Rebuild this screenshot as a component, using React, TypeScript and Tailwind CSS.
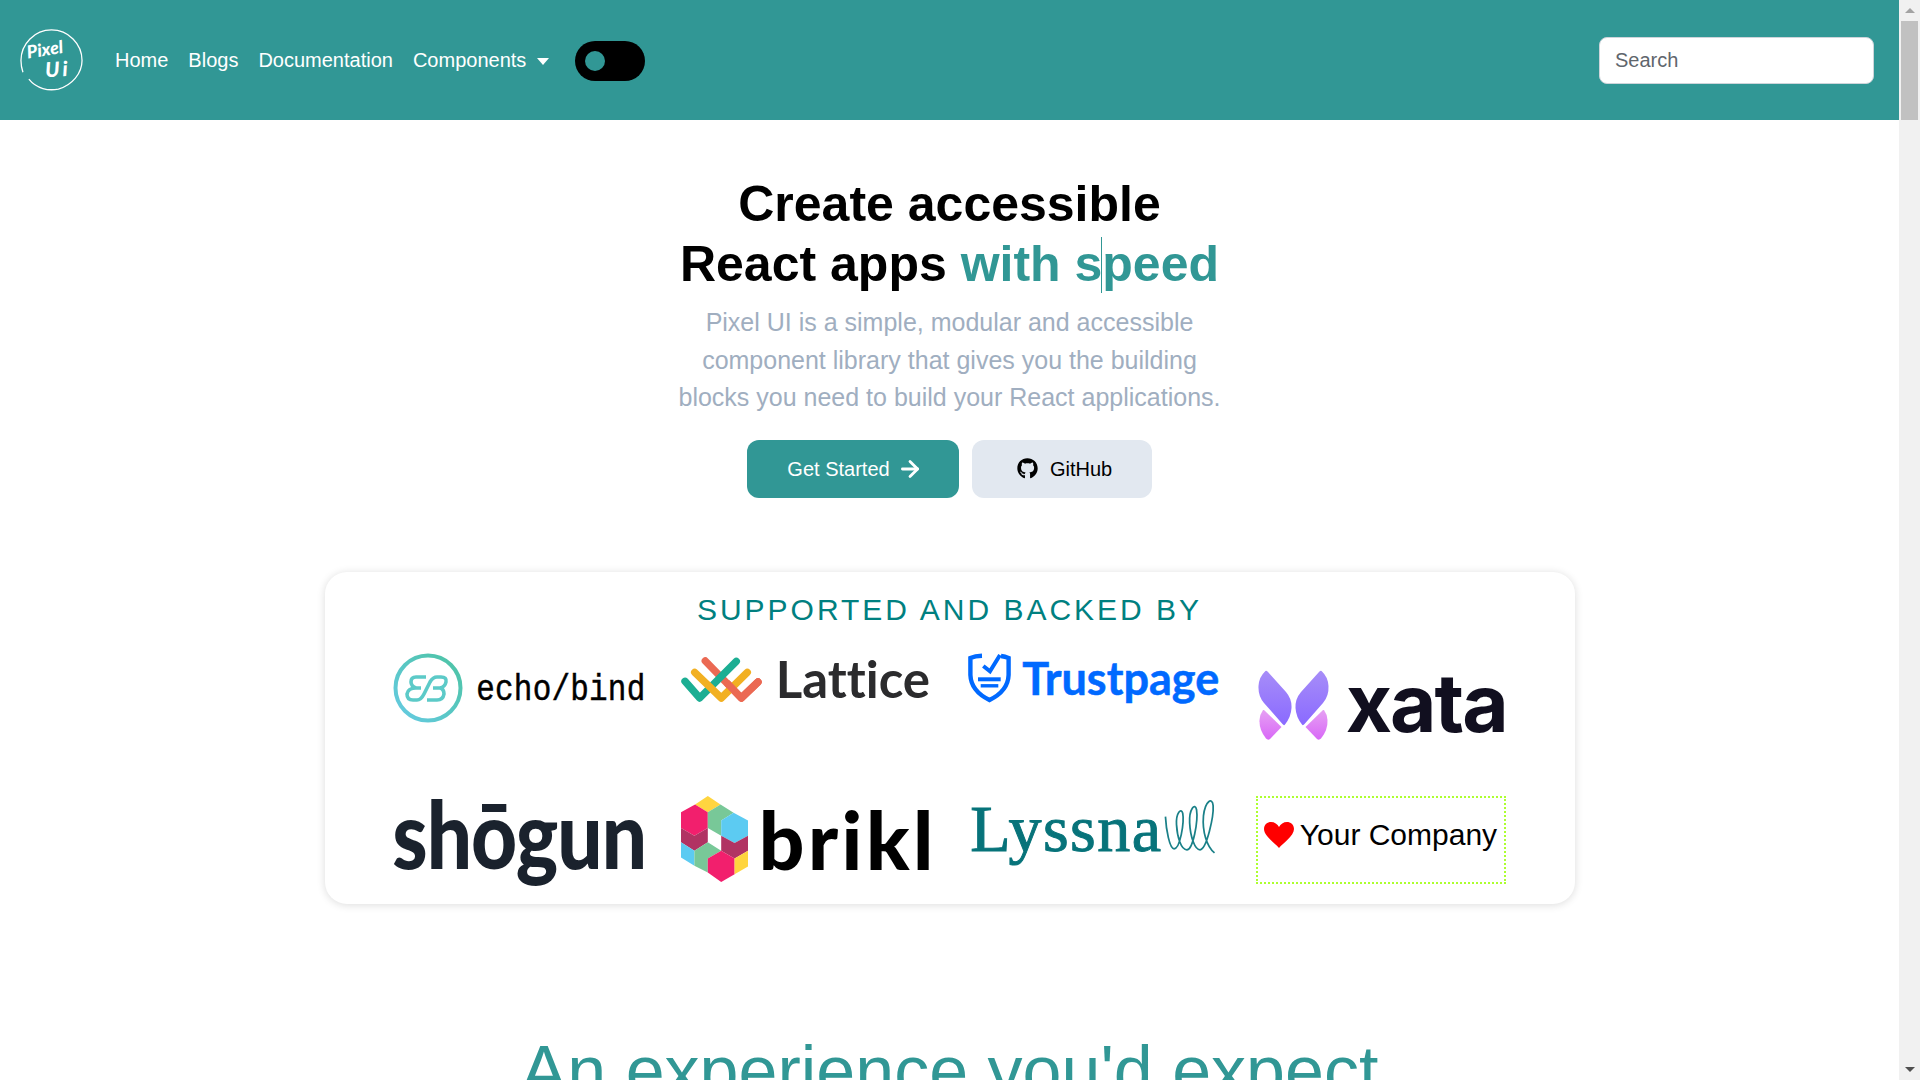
import React from 'react'
import { ArrowRight } from 'lucide-react'
import { FaGithub } from 'react-icons/fa'

// Site logo, round line with a gap at the lower left
function PixelLogo() {
  return (
    <svg width="65" height="65" viewBox="0 0 66 66" className="shrink-0">
      <path d="M10 52 C18 62 30 64 40 62 C54 58 64 46 64 33 C64 16 50 2 33 2 C16 2 2 16 2 33 C2 38 3 42 4 45" fill="none" stroke="#fff" strokeWidth="1.3" />
      <text x="9" y="31" transform="rotate(-9 9 31)" fill="#fff" fontFamily="Lato, sans-serif" fontStyle="italic" fontWeight="900" fontSize="18">Pixel</text>
      <text x="27" y="50" transform="rotate(-3 27 50)" fill="#fff" fontFamily="Lato, sans-serif" fontStyle="italic" fontWeight="900" fontSize="21" letterSpacing="3">Ui</text>
    </svg>
  )
}

function EchoBind() {
  return (
    <div className="flex items-center self-start">
      <svg width="70" height="70" viewBox="0 0 70 70" className="shrink-0">
        <defs>
          <linearGradient id="echo" x1="1" y1="0" x2="0" y2="1">
            <stop offset="0" stopColor="#4cc3a2" />
            <stop offset="1" stopColor="#66cbe4" />
          </linearGradient>
        </defs>
        <circle cx="35" cy="35" r="32.5" fill="none" stroke="url(#echo)" strokeWidth="4" />
        <path d="M33 24 H23 Q18 24 18 29 Q18 33 23 35 H28 M23 35 Q15 35 14 41 Q14 47 20 47 H24 Q28 47 31 41 L37 29 Q40 24 44 24 H48 Q54 24 53 29 Q52 34 47 35 H40 M47 35 Q51 36 51 41 Q50 47 44 47 H34" fill="none" stroke="#5ccac8" strokeWidth="3.6" />
      </svg>
      <span className="ml-[13px] mt-[3px] inline-block scale-y-[1.22] font-['Liberation_Mono',monospace] text-[31px] leading-none tracking-[0.2px] text-black [-webkit-text-stroke:0.4px_#000]">echo/bind</span>
    </div>
  )
}

function Lattice() {
  return (
    <div className="mt-1 flex items-start">
      <svg width="81" height="46" viewBox="0 0 81 46" className="shrink-0" fill="none" strokeWidth="7.4" strokeLinecap="round" strokeLinejoin="round">
        <path d="M24.3 4 L60.3 41 L77 25" stroke="#eb6953" />
        <path d="M4 24.3 L18.7 41 L55.3 4.3" stroke="#1cae93" />
        <path d="M13.7 15.3 L40.3 41 L66.3 15.3" stroke="#f2b022" />
        <path d="M47 27 L60.3 41 L77 25" stroke="#eb6953" />
      </svg>
      <span className="ml-[14px] mt-[-3px] font-['Lato',sans-serif] text-[51px] font-bold leading-[50px] text-[#2b2b2d] [font-variant-ligatures:none]">Lattice</span>
    </div>
  )
}

function Trustpage() {
  return (
    <div className="flex items-start">
      <svg width="44" height="50" viewBox="0 0 44 50" className="shrink-0" fill="none" stroke="#0069ff">
        <path d="M14 2.8 Q7 3 2.4 5 L2.4 22 Q3 38 21.5 47 Q40 38 40.6 22 L40.6 5 Q37 3.6 33 3" strokeWidth="4.4" />
        <path d="M15.3 13 L22 18.3 L32 2" strokeWidth="4" />
        <path d="M10 26.3 H32.7" strokeWidth="4" />
        <path d="M12.7 32.8 H30.3" strokeWidth="3.4" />
      </svg>
      <span className="ml-[10px] mt-[2px] font-['Lato',sans-serif] text-[45px] font-bold leading-[46px] text-[#0069ff] [-webkit-text-stroke:0.5px_#0069ff]">Trustpage</span>
    </div>
  )
}

function Xata() {
  return (
    <div className="ml-[2px] mt-[17px] flex items-start">
      <svg width="71" height="71" viewBox="0 0 71 71" className="shrink-0">
        <defs>
          <linearGradient id="wing" x1="0" y1="0" x2="0" y2="1">
            <stop offset="0" stopColor="#a78df8" />
            <stop offset="1" stopColor="#8a6aff" />
          </linearGradient>
          <linearGradient id="tail" x1="0" y1="0" x2="0" y2="1">
            <stop offset="0" stopColor="#e6a0f3" />
            <stop offset="1" stopColor="#d868f7" />
          </linearGradient>
        </defs>
        <path d="M7 1.5 Q8 0 10 2 L28 22 Q34 29 33.5 38 Q33 47 27 54.5 Q26 56 24.5 54 L6 33 Q0 26 0.5 16 Q1 7 7 1.5Z" fill="url(#wing)" />
        <path d="M64 1.5 Q63 0 61 2 L43 22 Q37 29 37.5 38 Q38 47 44 54.5 Q45 56 46.5 54 L65 33 Q71 26 70.5 16 Q70 7 64 1.5Z" fill="url(#wing)" />
        <path d="M6 40 L23.5 57 L12 69 Q10 70.5 8 68.5 Q1 60 1.5 50 Q2 44 5 40Z" fill="url(#tail)" />
        <path d="M65 40 L47.5 57 L59 69 Q61 70.5 63 68.5 Q70 60 69.5 50 Q69 44 66 40Z" fill="url(#tail)" />
      </svg>
      <span className="ml-[17px] mt-[-5px] font-['Inter',sans-serif] text-[80px] font-bold leading-[76px] tracking-[-2px] text-[#110f1f]">xata</span>
    </div>
  )
}

function Shogun() {
  return <span className="ml-[-1px] mt-[-6px] inline-block scale-y-[1.16] font-['Lato',sans-serif] text-[80px] font-black leading-[88px] tracking-[-1px] text-[#1a222d]">shōgun</span>
}

function Brikl() {
  const shapes: [string, string][] = [
    ['95,12 133,37 95,60 57,37', '#ffd53f'],
    ['57,37 95,60 95,107 55,130 15,107 15,60', '#f21f6d'],
    ['15,107 55,130 95,107 95,150 55,175 15,150', '#b13363'],
    ['15,150 55,175 55,220 15,195', '#5ccbf2'],
    ['133,37 172,62 135,85 135,130 95,107 95,60', '#78c898'],
    ['135,85 172,62 215,85 215,130 175,152 135,130', '#5ccbf2'],
    ['135,130 175,152 215,130 215,175 175,198 135,175', '#b13363'],
    ['95,150 135,175 95,198 95,240 55,220 55,175', '#78c898'],
    ['95,198 135,175 175,198 175,245 135,268 95,240', '#f21f6d'],
    ['175,198 215,175 215,222 175,245', '#ffd53f'],
  ]
  return (
    <div className="flex items-start">
      <svg width="67" height="86" viewBox="15 12 200 256" className="shrink-0">
        {shapes.map(([points, fill]) => (
          <polygon key={points} points={points} fill={fill} />
        ))}
      </svg>
      <span className="ml-[11px] mt-[1px] font-['Lato',sans-serif] text-[80px] font-black leading-[84px] tracking-[3.5px] text-black">brikl</span>
    </div>
  )
}

function Lyssna() {
  return (
    <div className="ml-[2px] flex items-start">
      <span className="font-['Liberation_Serif',serif] text-[66px] leading-[66px] tracking-[1.5px] text-[#07737a] [-webkit-text-stroke:1px_#07737a]">Lyssna</span>
      <svg width="55" height="57" viewBox="45 18 155 165" className="mt-[2px] shrink-0">
        <path d="M50 72 C52 110 62 165 75 165 C92 165 105 90 100 62 C96 45 80 60 82 95 C84 130 95 168 112 168 C130 168 145 85 140 52 C136 30 118 50 120 90 C122 130 135 168 150 168 C170 165 190 70 188 40 C186 15 165 25 160 70 C156 115 170 160 192 177" fill="none" stroke="#1a8088" strokeWidth="5" />
      </svg>
    </div>
  )
}

function YourCompany() {
  return (
    <div className="flex h-[88px] w-[250px] items-start border-2 border-dotted border-[#adff2f] pl-[5px] pt-[18px]">
      <svg width="32" height="28" viewBox="0 0 32 28" className="mt-[5px] shrink-0">
        <path d="M16 27 C12 22 1 15 1 8 C1 3.5 4.5 1 8 1 C11.5 1 14.5 3 16 6 C17.5 3 20.5 1 24 1 C27.5 1 31 3.5 31 8 C31 15 20 22 16 27Z" fill="#ff0000" />
      </svg>
      <span className="ml-[5px] text-[30px] leading-[38px] text-black">Your Company</span>
    </div>
  )
}

export default function App() {
  return (
    <div className="flex h-screen overflow-hidden bg-white font-['Liberation_Sans',Arial,sans-serif]">
      <div className="min-w-0 flex-1 overflow-hidden">
        <nav className="flex h-[120px] items-center justify-between bg-[#319795] pl-[19px] pr-[25px]">
          <div className="flex items-center">
            <PixelLogo />
            <ul className="ml-[31px] flex items-center gap-5 text-[20px] text-white">
              <li>Home</li>
              <li>Blogs</li>
              <li>Documentation</li>
              <li className="flex items-center">
                Components
                <span className="ml-[11px] mt-[2px] border-x-[6px] border-t-[7px] border-x-transparent border-t-white" />
              </li>
            </ul>
            <div className="ml-[26px] mt-[2px] flex h-10 w-[70px] items-center rounded-full bg-black pl-[10px]">
              <span className="h-5 w-5 rounded-full bg-[#319795]" />
            </div>
          </div>
          <div className="flex h-[47px] w-[275px] items-center rounded-lg border border-[#ced4da] bg-white px-[15px] text-[20px] text-[#5f666d]">Search</div>
        </nav>

        <main className="flex flex-col items-center">
          <h1 className="mt-[54px] text-center text-[50px] font-bold leading-[60px] text-black">
            Create accessible
            <br />
            React apps{' '}
            <span className="text-[#319795]">
              with s
              <span className="relative inline-block w-0">
                <span className="absolute left-[-1px] top-[-44px] h-[56px] w-px bg-[#319795]" />
              </span>
              peed
            </span>
          </h1>
          <p className="mt-[10px] w-[600px] text-center text-[25px] leading-[37.5px] text-[#a0aec0]">
            Pixel UI is a simple, modular and accessible
            <br />
            component library that gives you the building
            <br />
            blocks you need to build your React applications.
          </p>
          <div className="mt-[23px] flex gap-[13px] text-[20px]">
            <button className="flex h-[58px] w-[212px] items-center justify-center gap-[7px] rounded-xl bg-[#319795] pl-[4px] text-white">
              Get Started
              <ArrowRight size={26} strokeWidth={2.6} />
            </button>
            <button className="flex h-[58px] w-[180px] items-center justify-center gap-3 rounded-xl bg-[#e2e8f0] pl-[5px] text-black">
              <FaGithub size={21} />
              GitHub
            </button>
          </div>

          <section className="mt-[74px] flex w-[1250px] flex-col items-center rounded-[22px] bg-white pb-5 pt-[19px] shadow-[0_1px_8px_rgba(0,0,0,0.14)]">
            <h2 className="text-[30px] leading-[38px] tracking-[3px] text-[#008080]">SUPPORTED AND BACKED BY</h2>
            <div className="mt-[24px] grid grid-cols-[repeat(4,250px)] grid-rows-[87px_88px] gap-x-[37.5px] gap-y-[56px] whitespace-nowrap">
              <EchoBind />
              <Lattice />
              <Trustpage />
              <Xata />
              <Shogun />
              <Brikl />
              <Lyssna />
              <YourCompany />
            </div>
          </section>

          <h2 className="mt-[125px] whitespace-nowrap text-center text-[70px] leading-[84px] text-[#319795]">An experience you'd expect</h2>
        </main>
      </div>

      <aside className="flex h-full w-[21px] shrink-0 flex-col items-center bg-[#f1f1f1]">
        <div className="flex h-[21px] items-center">
          <span className="border-x-[5px] border-b-[5px] border-x-transparent border-b-[#a3a3a3]" />
        </div>
        <div className="h-[99px] w-[17px] bg-[#c1c1c1]" />
        <div className="mt-auto flex h-[21px] items-center">
          <span className="border-x-[5px] border-t-[5px] border-x-transparent border-t-[#505050]" />
        </div>
      </aside>
    </div>
  )
}
